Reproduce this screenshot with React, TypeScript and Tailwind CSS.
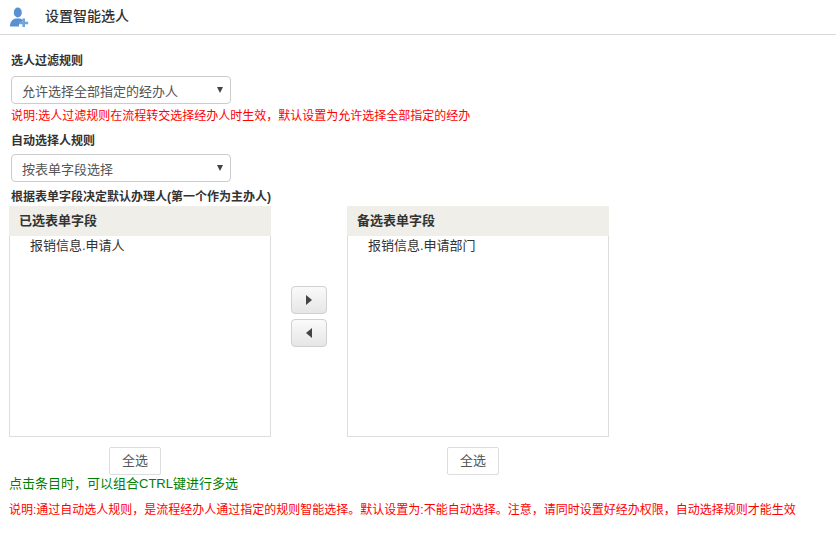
import React from 'react';

const font = { fontFamily: '"Liberation Sans", "Noto Sans CJK SC", sans-serif' };

const UserPlusIcon = () => (
  <svg width="20" height="21" viewBox="0 0 20 21" className="ml-[9px] mt-[2px]">
    <ellipse cx="8.8" cy="5.5" rx="4" ry="5" fill="#5b8fd4" />
    <path d="M1 19.5 C1 15 3 12.5 6.5 11.5 L11 11.5 C12.5 12 13.5 12.5 14 13.5 L11 19.5 Z" fill="#5b8fd4" />
    <path d="M13 14 h3 v3 h3 v2.8 h-3 v1.2 h-3 v-1.2 h-3 v-2.8 h3 Z" fill="#ffffff" />
    <path d="M13.4 11.5 h2.6 v3.2 h3.2 v2.6 h-3.2 v2.7 h-2.6 v-2.7 h-3.2 v-2.6 h3.2 Z" fill="#6fa3dc" />
  </svg>
);

const SelectBox = ({ text }: { text: string }) => (
  <div className="ml-[11px] flex h-[28px] w-[220px] items-center justify-between rounded-[4px] border border-[#cccccc] bg-white pl-[10px] pr-[7px] pt-[3px] text-[13px] text-[#555555]">
    <span>{text}</span>
    <span className="-mt-[3px] h-0 w-0 border-x-[3.5px] border-t-[6px] border-x-transparent border-t-[#444444]" />
  </div>
);

const FieldList = ({ title, item }: { title: string; item: string }) => (
  <div className="flex w-[262px] flex-col">
    <div className="h-[231px] w-full border border-t-0 border-[#dddddd]">
      <div className="-mx-px flex h-[30px] items-center bg-[#efeee8] pl-[10px] text-[13px] font-bold text-[#333333]">
        {title}
      </div>
      <div className="pl-[20px] pt-[1px] text-[13px] leading-[18px] text-[#333333]">{item}</div>
    </div>
    <button className="ml-[100px] mt-[10px] h-[28px] w-[52px] rounded-[2px] border border-[#dddddd] bg-white text-[13px] text-[#555555]">
      全选
    </button>
  </div>
);

const MoveButton = ({ dir }: { dir: 'right' | 'left' }) => (
  <button className="flex h-[28px] w-[36px] items-center justify-center rounded-[4px] border border-[#d0d0d0] bg-gradient-to-b from-[#fafafa] to-[#e6e6e6]">
    {dir === 'right' ? (
      <span className="h-0 w-0 border-y-[5px] border-l-[6px] border-y-transparent border-l-[#444444]" />
    ) : (
      <span className="h-0 w-0 border-y-[5px] border-r-[6px] border-y-transparent border-r-[#444444]" />
    )}
  </button>
);

export default function App() {
  return (
    <div className="h-[538px] w-[836px] overflow-hidden bg-white" style={font}>
      <div className="flex h-[35px] items-center gap-[16px] border-b border-[#d9d9d9] pb-[2px]">
        <UserPlusIcon />
        <span className="text-[14px] font-medium text-[#333333]">设置智能选人</span>
      </div>

      <div className="ml-[11px] mt-[17px] text-[12px] font-bold leading-[18px] text-[#333333]">选人过滤规则</div>
      <div className="mt-[6px]">
        <SelectBox text="允许选择全部指定的经办人" />
      </div>
      <div className="ml-[11px] mt-[3px] text-[12px] leading-[18px] text-[#ff0000]">
        说明:选人过滤规则在流程转交选择经办人时生效，默认设置为允许选择全部指定的经办
      </div>
      <div className="ml-[11px] mt-[7px] text-[12px] font-bold leading-[18px] text-[#333333]">自动选择人规则</div>
      <div className="mt-[4px]">
        <SelectBox text="按表单字段选择" />
      </div>
      <div className="ml-[11px] mt-[6px] text-[12px] font-bold leading-[18px] text-[#333333]">
        根据表单字段决定默认办理人(第一个作为主办人)
      </div>

      <div className="ml-[9px] flex">
        <FieldList title="已选表单字段" item="报销信息.申请人" />
        <div className="flex w-[76px] flex-col items-center gap-[5px] pt-[80px]">
          <MoveButton dir="right" />
          <MoveButton dir="left" />
        </div>
        <FieldList title="备选表单字段" item="报销信息.申请部门" />
      </div>

      <div className="ml-[9px] -mt-px text-[13px] leading-[20px] text-[#008000]">点击条目时，可以组合CTRL键进行多选</div>
      <div className="ml-[9px] mt-[7px] text-[12px] leading-[18px] text-[#ff0000]">
        说明:通过自动选人规则，是流程经办人通过指定的规则智能选择。默认设置为:不能自动选择。注意，请同时设置好经办权限，自动选择规则才能生效
      </div>
    </div>
  );
}
